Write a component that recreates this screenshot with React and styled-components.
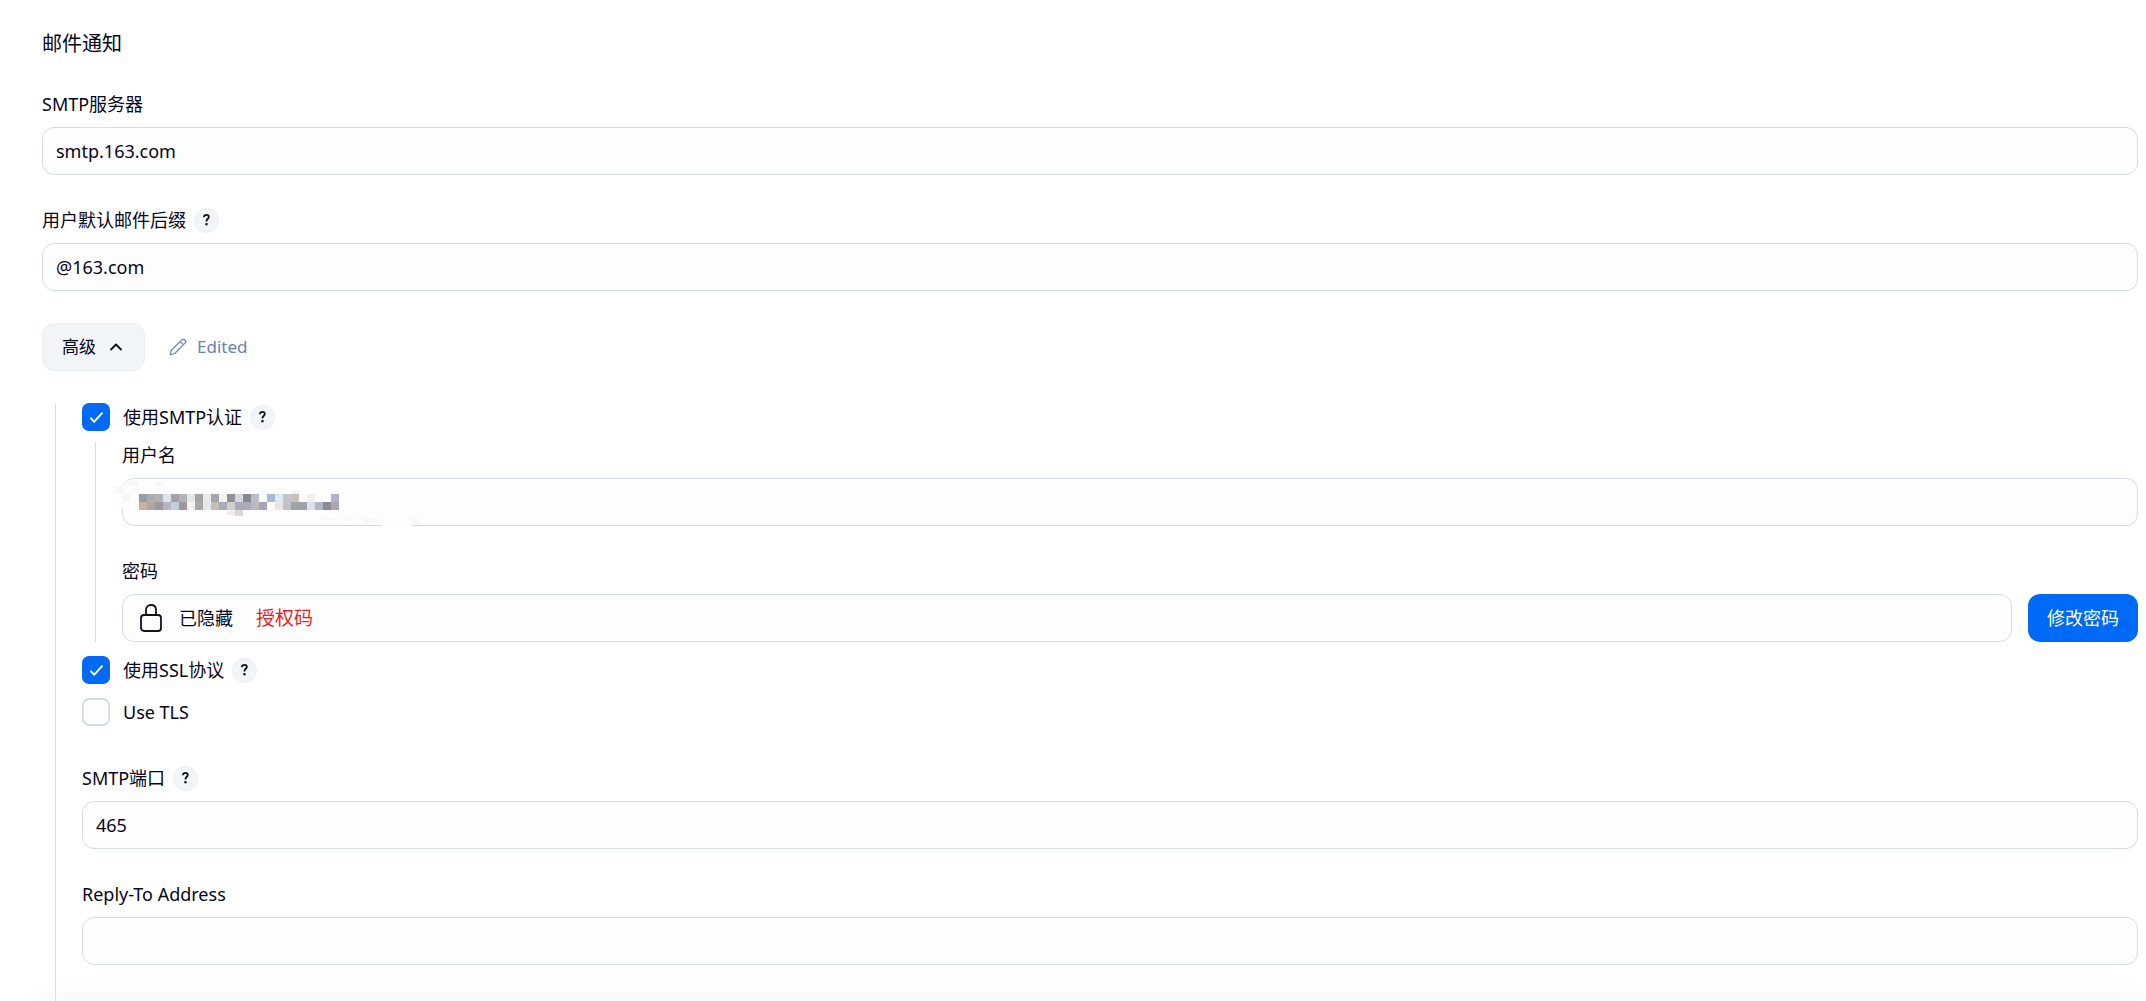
import { useState } from "react";
import styled, { createGlobalStyle } from "styled-components";

const GlobalStyle = createGlobalStyle`
  * {
    box-sizing: border-box;
  }
  body {
    margin: 0;
    background: #fff;
    color: #060419;
    font-family: "Noto Sans", "Noto Sans CJK SC", sans-serif;
    font-size: 18px;
    line-height: 26px;
  }
  button, input {
    font: inherit;
    color: inherit;
  }
`;

const Page = styled.main`
  height: 100vh;
  overflow: hidden;
  padding: 30px 8px 0 42px;
  display: flex;
  flex-direction: column;
`;

const Title = styled.h1`
  margin: 0 0 33px;
  font-size: 20px;
  font-weight: 400;
  line-height: 28px;
`;

const Field = styled.div`
  display: flex;
  flex-direction: column;
  gap: 10px;
  margin-bottom: ${(props) => (props.$last ? 0 : 32)}px;
`;

const LabelRow = styled.div`
  display: flex;
  align-items: center;
  gap: 8px;
  height: 26px;
`;

const Input = styled.input`
  width: 100%;
  height: 48px;
  padding: 0 13px;
  border: 1px solid #d5dbea;
  border-radius: 12px;
  background: #fdfdfe;
  outline: none;
`;

const Help = styled.button`
  display: flex;
  align-items: center;
  justify-content: center;
  width: 25px;
  height: 25px;
  padding: 0;
  border: 1px solid #ebeff4;
  border-radius: 50%;
  background: #f1f5f8;
`;

const AdvancedRow = styled.div`
  display: flex;
  align-items: center;
  gap: 24px;
  margin-bottom: 32px;
  font-size: 17px;
`;

const AdvancedButton = styled.button`
  display: flex;
  align-items: center;
  gap: 13px;
  height: 48px;
  padding: 0 21px 0 19px;
  border: 1px solid #ebeff4;
  border-radius: 12px;
  background: #f1f5f8;
`;

const Edited = styled.span`
  display: flex;
  align-items: center;
  gap: 10px;
  color: #6684b0;
`;

const Advanced = styled.section`
  flex: 1 0 auto;
  margin-left: 13px;
  padding-left: 26px;
  border-left: 1px solid #d5dbea;
`;

const AuthGroup = styled.div`
  margin: 11px 0 14px 13px;
  padding-left: 26px;
  border-left: 1px solid #d5dbea;
`;

const CheckRow = styled.div`
  display: flex;
  align-items: center;
  gap: 8px;
  height: 28px;
`;

const CheckLabel = styled.label`
  display: flex;
  align-items: center;
  gap: 13px;
`;

const CheckBox = styled.span`
  position: relative;
  width: 28px;
  height: 28px;
  input {
    appearance: none;
    display: block;
    width: 28px;
    height: 28px;
    margin: 0;
    border: 2px solid #d5dbea;
    border-radius: 7px;
    background: #fdfdfe;
  }
  input:checked {
    border-color: #0069f6;
    background: #0069f6;
  }
  svg {
    position: absolute;
    inset: 0;
    pointer-events: none;
  }
`;

const TlsRow = styled(CheckRow)`
  margin: 14px 0 39px;
`;

const PasswordRow = styled.div`
  display: flex;
  gap: 16px;
`;

const HiddenValue = styled.div`
  flex: 1;
  display: flex;
  align-items: center;
  height: 48px;
  padding: 0 16px;
  border: 1px solid #d5dbea;
  border-radius: 12px;
  background: #fdfdfe;
`;

const HiddenText = styled.span`
  margin: 0 23px 0 16px;
`;

const Note = styled.span`
  color: #ee1c25;
  font-size: 19px;
`;

const PrimaryButton = styled.button`
  height: 48px;
  padding: 0 19px;
  border: 0;
  border-radius: 12px;
  background: #0069f6;
  color: #fff;
`;

const Masked = styled.div`
  position: relative;
`;

const Mosaic = styled.svg`
  position: absolute;
  left: -7px;
  top: 0;
  pointer-events: none;
`;

const FooterShadow = styled.div`
  position: fixed;
  left: 36px;
  right: 0;
  bottom: -10px;
  height: 10px;
  box-shadow: 0 0 24px #e6ecf4;
`;

// 8px cells, one array for each line of the mosaic
const cells = [
  ["#9a9ba2", "#acabb0", "#b3b2b8", "#dfe2ea", "#a2a1a5", "#b3b2b8", "#e8e5e3", "#a2a2a6", "#ebe8e7", "#a6a6b0", "#f3f3f4", "#939098", "#d5d8e0", "#858993", "#bcbec5", "#f9feff", "#aab9ce", "#d9ebf4", "#c1c3cd", "#c9c0bc", "#fcfcfd", "#f3efef", "#fcfcfd", "#fcfcfd", "#aeb3c7"],
  ["#c5b0a4", "#afa5a4", "#a1979b", "#b1b8c2", "#c0cee0", "#9c979a", "#f4f2ed", "#a7a8ad", "#e5e9ed", "#c4bebb", "#a7abb8", "#d0cfce", "#a8abba", "#a8abba", "#bcb8bd", "#a8a6b2", "#fcfcfd", "#ede4e2", "#c0c2c8", "#9fa3aa", "#a1a1a5", "#dde0e9", "#b0b9c3", "#8b8894", "#aaa7b2"],
];

// faint leftovers around the two lines: x, y, width, height, colour
const specks = [
  [5, 3, 6, 5, "#fdfdfe"],
  [5, 8, 4, 22, "#fdfdfe"],
  [8, 3, 16, 5, "#f6f7fa"],
  [0, 8, 8, 8, "#f7f8fa"],
  [8, 16, 8, 8, "#f6f7fb"],
  [2, 24, 6, 3, "#f9fafc"],
  [40, 4, 8, 4, "#f8f9fb"],
  [176, 13, 8, 3, "#edf0f6"],
  [112, 32, 8, 5, "#efecea"],
  [120, 32, 8, 6, "#ddd8d8"],
  [208, 40, 16, 2, "#f7f8fa"],
  [232, 40, 8, 3, "#f7f8fa"],
  [248, 40, 16, 5, "#f7f8fa"],
  [267, 44, 30, 4, "#fdfdfe"],
  [296, 40, 8, 7, "#f7f8fb"],
];

function HelpButton({topic}){
  return (
    <Help type="button" aria-label={topic}>
      <svg width="11" height="14" viewBox="0 0 11 14" fill="none" stroke="#10101f" strokeWidth="1.8">
        <path d="M2.9 4.3C2.9 2.7 3.9 1.9 5.4 1.9S7.8 2.8 7.8 4C7.8 5.8 5.4 5.8 5.4 8.4" />
        <path d="M4.3 11.2H6.6" strokeWidth="2.2" />
      </svg>
    </Help>
  );
}

function Check({id, text, help, checked}){
  const [on, setOn] = useState(checked);
  return (
    <>
      <CheckLabel htmlFor={id}>
        <CheckBox>
          <input id={id} type="checkbox" checked={on} onChange={() => setOn(!on)} />
          {on && <svg width="28" height="28" viewBox="0 0 28 28" fill="none" stroke="#fff" strokeWidth="2" strokeLinecap="round" strokeLinejoin="round">
            <path d="M9 15.4L12.3 18.7L20 10.2" />
          </svg>}
        </CheckBox>
        {text}
      </CheckLabel>
      {help && <HelpButton topic={text} />}
    </>
  );
}

function TextField({id, label, help, value}){
  return (
    <Field>
      <LabelRow>
        <label htmlFor={id}>{label}</label>
        {help && <HelpButton topic={label} />}
      </LabelRow>
      <Input id={id} type="text" defaultValue={value} />
    </Field>
  );
}

function App(){
  return (
    <Page>
      <GlobalStyle />
      <Title>邮件通知</Title>
      <TextField id="server" label="SMTP服务器" value="smtp.163.com" />
      <TextField id="suffix" label="用户默认邮件后缀" value="@163.com" help />
      <AdvancedRow>
        <AdvancedButton type="button">
          高级
          <svg width="14" height="10" viewBox="0 0 14 10" fill="none" stroke="#10101f" strokeWidth="1.8" strokeLinecap="round" strokeLinejoin="round">
            <path d="M2 7.5L7 2.5L12 7.5" />
          </svg>
        </AdvancedButton>
        <Edited>
          <svg width="18" height="18" viewBox="0 0 18 18" fill="none" stroke="#6684b0" strokeWidth="1.2" strokeLinejoin="round">
            <path d="M1.2 16.8L2.4 12.2L12.8 1.9C13.6 1.1 15 1.1 15.9 2C16.8 2.9 16.8 4.3 16 5.1L5.7 15.5Z" />
            <path d="M11.2 3.6L14.4 6.7" />
          </svg>
          Edited
        </Edited>
      </AdvancedRow>
      <Advanced>
        <CheckRow>
          <Check id="auth" text="使用SMTP认证" checked={true} help />
        </CheckRow>
        <AuthGroup>
          <Field>
            <LabelRow><label htmlFor="user">用户名</label></LabelRow>
            <Masked>
              <Input id="user" type="text" />
              <Mosaic width="320" height="52" viewBox="0 0 320 52" shapeRendering="crispEdges">
                {specks.map(([x, y, w, h, color]) => (
                  <rect key={`${x}-${y}`} x={x} y={y} width={w} height={h} fill={color} />
                ))}
                {cells.map((line, y) => line.map((color, x) => (
                  <rect key={`${x}-${y}`} x={24 + x * 8} y={16 + y * 8} width="8" height="8" fill={color} />
                )))}
              </Mosaic>
            </Masked>
          </Field>
          <Field $last>
            <LabelRow>密码</LabelRow>
            <PasswordRow>
              <HiddenValue>
                <svg width="24" height="30" viewBox="0 0 24 30" fill="none" stroke="#10101f" strokeWidth="1.8">
                  <rect x="2" y="12" width="20" height="16" rx="3" />
                  <path d="M7 12V7C7 4 9 2 12 2S17 4 17 7V12" />
                </svg>
                <HiddenText>已隐藏</HiddenText>
                <Note>授权码</Note>
              </HiddenValue>
              <PrimaryButton type="button">修改密码</PrimaryButton>
            </PasswordRow>
          </Field>
        </AuthGroup>
        <CheckRow>
          <Check id="ssl" text="使用SSL协议" checked={true} help />
        </CheckRow>
        <TlsRow>
          <Check id="tls" text="Use TLS" checked={false} />
        </TlsRow>
        <TextField id="port" label="SMTP端口" value="465" help />
        <TextField id="reply" label="Reply-To Address" value="" />
      </Advanced>
      <FooterShadow />
    </Page>
  );
}

export default App;
